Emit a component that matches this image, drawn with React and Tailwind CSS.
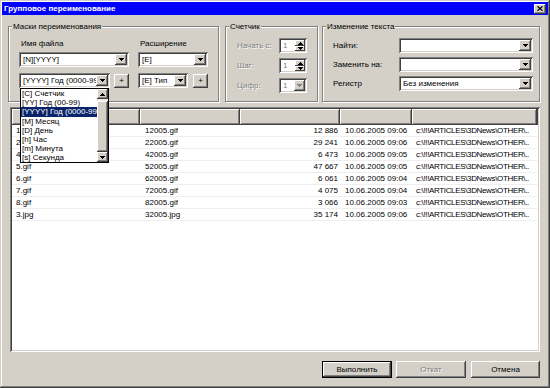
import React from "react";

const RAISED =
  "shadow-[inset_-1px_-1px_0_#404040,inset_1px_1px_0_#ffffff,inset_-2px_-2px_0_#808080,inset_2px_2px_0_#d4d0c8]";
const RAISED_THIN = "shadow-[inset_-1px_-1px_0_#404040,inset_1px_1px_0_#ffffff]";
const SUNKEN =
  "shadow-[inset_1px_1px_0_#808080,inset_-1px_-1px_0_#ffffff,inset_2px_2px_0_#404040,inset_-2px_-2px_0_#d4d0c8]";
const DISABLED = "text-[#808080] [text-shadow:1px_1px_0_#ffffff]";

function DownArrow({ color = "#000" }) {
  return (
    <svg width="5" height="3" viewBox="0 0 5 3" shapeRendering="crispEdges">
      <path d="M0 0h5v1h-1v1h-1v1h-1v-1h-1v-1h-1z" fill={color} />
    </svg>
  );
}

function UpArrow({ color = "#000" }) {
  return (
    <svg width="5" height="3" viewBox="0 0 5 3" shapeRendering="crispEdges">
      <path d="M2 0h1v1h1v1h1v1h-5v-1h1v-1h1z" fill={color} />
    </svg>
  );
}

function Combo({ className = "", text = "", disabled = false }) {
  return (
    <div className={`flex h-[15px] bg-white p-[2px] ${SUNKEN} ${className}`}>
      <div
        className={`flex-1 overflow-hidden whitespace-nowrap pl-[2px] leading-[11px] ${
          disabled ? "text-[#808080]" : "text-black"
        }`}
      >
        {text}
      </div>
      <div className={`flex h-[11px] w-[12px] items-center justify-center bg-[#d4d0c8] ${RAISED}`}>
        <DownArrow color={disabled ? "#808080" : "#000"} />
      </div>
    </div>
  );
}

function Spin({ combo = false }) {
  return (
    <div className={`flex h-[15px] w-[28px] bg-white p-[2px] ${SUNKEN}`}>
      <div className="flex-1 pl-[2px] leading-[11px] text-[#808080]">1</div>
      {combo ? (
        <div className={`flex h-[11px] w-[11px] items-center justify-center bg-[#d4d0c8] ${RAISED}`}>
          <DownArrow color="#808080" />
        </div>
      ) : (
        <div className="flex w-[10px] flex-col">
          <div className={`flex h-[6px] items-center justify-center bg-[#d4d0c8] ${RAISED_THIN}`}>
            <UpArrow />
          </div>
          <div className={`flex h-[5px] items-center justify-center bg-[#d4d0c8] ${RAISED_THIN}`}>
            <DownArrow />
          </div>
        </div>
      )}
    </div>
  );
}

function Group({ title, className = "", children }) {
  return (
    <div
      className={`relative border border-[#808080] shadow-[inset_1px_1px_0_#ffffff,1px_1px_0_#ffffff] ${className}`}
    >
      <span className="absolute left-[3px] top-[-6px] bg-[#d4d0c8] px-[1px] leading-[11px]">{title}</span>
      {children}
    </div>
  );
}

function PlusButton() {
  return (
    <div className={`flex h-[14px] w-[15px] items-center justify-center bg-[#d4d0c8] ${RAISED}`}>
      <span className="leading-[10px]">+</span>
    </div>
  );
}

const rows = [
  ["1.gif", "12005.gif", "12 886", "10.06.2005 09:06"],
  ["2.gif", "22005.gif", "29 241", "10.06.2005 09:06"],
  ["4.gif", "42005.gif", "6 473", "10.06.2005 09:05"],
  ["5.gif", "52005.gif", "47 667", "10.06.2005 09:05"],
  ["6.gif", "62005.gif", "6 061", "10.06.2005 09:04"],
  ["7.gif", "72005.gif", "4 075", "10.06.2005 09:04"],
  ["8.gif", "82005.gif", "3 066", "10.06.2005 09:03"],
  ["3.jpg", "32005.jpg", "35 174", "10.06.2005 09:06"],
];

const menuItems = [
  "[C] Счетчик",
  "[YY] Год (00-99)",
  "[YYYY] Год (0000-9999)",
  "[M] Месяц",
  "[D] День",
  "[h] Час",
  "[m] Минута",
  "[s] Секунда",
];

export default function App() {
  return (
    <div
      className={`relative flex h-[388px] w-[550px] flex-col overflow-hidden bg-[#d4d0c8] p-[2px] font-['Liberation_Sans',Arial,sans-serif] text-[8px] text-black shadow-[inset_-1px_-1px_0_#404040,inset_1px_1px_0_#d4d0c8,inset_-2px_-2px_0_#808080,inset_2px_2px_0_#ffffff]`}
    >
      {/* Title bar */}
      <div className="flex h-[13px] items-center justify-between bg-[#0000ff] pl-[2px] pr-[2px]">
        <span className="font-bold leading-[13px] text-white">Групповое переименование</span>
        <div className={`flex h-[10px] w-[12px] items-center justify-center bg-[#d4d0c8] ${RAISED}`}>
          <svg width="6" height="5" viewBox="0 0 6 5">
            <path d="M0.5 0.3L5.5 4.7M5.5 0.3L0.5 4.7" stroke="#000" strokeWidth="1.3" />
          </svg>
        </div>
      </div>

      {/* Group boxes */}
      <div className="ml-[6px] mt-[11px] flex h-[76px]">
        <Group title="Маски переименования" className="h-[76px] w-[211px]">
          <div className="flex gap-[9px] pl-[10px] pt-[11px]">
            <div className="flex w-[110px] flex-col">
              <div className="h-[11px] pl-[2px] leading-[11px]">Имя файла</div>
              <Combo className="mt-[3px] w-[110px]" text="[N][YYYY]" />
              <div className="mt-[6px] flex items-center gap-[4px]">
                <Combo className="w-[91px]" text="[YYYY] Год (0000-9999)" />
                <PlusButton />
              </div>
            </div>
            <div className="flex w-[70px] flex-col">
              <div className="h-[11px] pl-[2px] leading-[11px]">Расширение</div>
              <Combo className="mt-[3px] w-[70px]" text="[E]" />
              <div className="mt-[6px] flex items-center gap-[5px]">
                <Combo className="w-[50px]" text="[E] Тип" />
                <PlusButton />
              </div>
            </div>
          </div>
        </Group>

        <Group title="Счетчик" className="ml-[6px] h-[76px] w-[93px]">
          <div className="flex flex-col gap-[5px] pl-[11px] pt-[11px]">
            <div className="flex h-[15px] items-center">
              <span className={`w-[42px] leading-[11px] ${DISABLED}`}>Начать с:</span>
              <Spin />
            </div>
            <div className="flex h-[15px] items-center">
              <span className={`w-[42px] leading-[11px] ${DISABLED}`}>Шаг:</span>
              <Spin />
            </div>
            <div className="flex h-[15px] items-center">
              <span className={`w-[42px] leading-[11px] ${DISABLED}`}>Цифр:</span>
              <Spin combo />
            </div>
          </div>
        </Group>

        <Group title="Изменение текста" className="ml-[4px] h-[76px] w-[218px]">
          <div className="flex flex-col gap-[4px] pl-[10px] pt-[11px]">
            <div className="flex h-[15px] items-center">
              <span className="w-[66px] leading-[11px]">Найти:</span>
              <Combo className="w-[134px]" />
            </div>
            <div className="flex h-[15px] items-center">
              <span className="w-[66px] leading-[11px]">Заменить на:</span>
              <Combo className="w-[134px]" />
            </div>
            <div className="flex h-[15px] items-center">
              <span className="w-[66px] leading-[11px]">Регистр</span>
              <Combo className="w-[134px]" text="Без изменения" />
            </div>
          </div>
        </Group>
      </div>

      {/* File list */}
      <div className={`ml-[8px] mt-[5px] flex h-[245px] w-[530px] flex-col bg-white p-[2px] ${SUNKEN}`}>
        <div className="flex h-[16px] shrink-0">
          <div className={`w-[128px] bg-[#d4d0c8] ${RAISED}`} />
          <div className={`w-[100px] bg-[#d4d0c8] ${RAISED}`} />
          <div className={`w-[100px] bg-[#d4d0c8] ${RAISED}`} />
          <div className={`w-[72px] bg-[#d4d0c8] ${RAISED}`} />
          <div className={`w-[125px] bg-[#d4d0c8] ${RAISED}`} />
          <div className={`flex-1 bg-[#d4d0c8] ${RAISED}`} />
        </div>
        {rows.map((r) => (
          <div key={r[0]} className="flex h-[12px] shrink-0 border-b border-[#efefef] leading-[11px]">
            <div className="w-[128px] overflow-hidden whitespace-nowrap pl-[4px]">{r[0]}</div>
            <div className="w-[100px] overflow-hidden whitespace-nowrap pl-[5px]">{r[1]}</div>
            <div className="w-[100px] overflow-hidden whitespace-nowrap pr-[2px] text-right">{r[2]}</div>
            <div className="w-[72px] overflow-hidden whitespace-nowrap pl-[5px]">{r[3]}</div>
            <div className="w-[124px] overflow-hidden whitespace-nowrap pl-[4px] tracking-[-0.35px]">
              {"c:\\!!!ARTICLES\\3DNews\\OTHER\\.."}
            </div>
          </div>
        ))}
      </div>

      {/* Buttons */}
      <div className="mr-[8px] mt-[9px] flex justify-end gap-[4px]">
        <div className="h-[17px] w-[70px] border border-black">
          <div className={`flex h-full w-full items-center justify-center bg-[#d4d0c8] ${RAISED}`}>
            <span className="leading-[11px]">Выполнить</span>
          </div>
        </div>
        <div className={`flex h-[17px] w-[70px] items-center justify-center bg-[#d4d0c8] ${RAISED}`}>
          <span className={`leading-[11px] ${DISABLED}`}>Откат</span>
        </div>
        <div className={`ml-[1px] flex h-[17px] w-[69px] items-center justify-center bg-[#d4d0c8] ${RAISED}`}>
          <span className="leading-[11px]">Отмена</span>
        </div>
      </div>

      {/* Open dropdown list overlay */}
      <div className="absolute left-[20px] top-[88px] flex h-[75px] w-[89px] border border-black bg-white">
        <div className="flex-1 overflow-hidden">
          {menuItems.map((m, i) => (
            <div
              key={m}
              className={`h-[9.2px] overflow-hidden whitespace-nowrap pl-[1px] leading-[9.2px] ${
                i === 2 ? "bg-[#0a246a] text-white" : ""
              }`}
            >
              {m}
            </div>
          ))}
        </div>
        <div className="flex w-[11px] flex-col bg-[#ecebe6]">
          <div className={`flex h-[10px] items-center justify-center bg-[#d4d0c8] ${RAISED}`}>
            <UpArrow />
          </div>
          <div className="h-[2px]" />
          <div className={`flex-1 bg-[#d4d0c8] ${RAISED}`} />
          <div className={`flex h-[10px] items-center justify-center bg-[#d4d0c8] ${RAISED}`}>
            <DownArrow />
          </div>
        </div>
      </div>
    </div>
  );
}
